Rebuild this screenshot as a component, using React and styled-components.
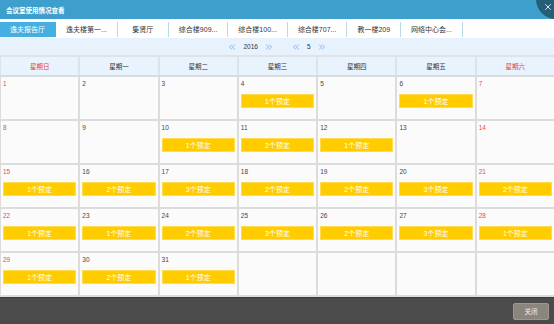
import styled, { createGlobalStyle } from "styled-components";
import { ChevronsLeft, ChevronsRight, X } from "lucide-react";

const GlobalStyle = createGlobalStyle`
  html, body {
    margin: 0;
    padding: 0;
    background: #ffffff;
  }
  body {
    font-family: "Liberation Sans", "Noto Sans CJK SC", sans-serif;
  }
`;

const Dialog = styled.div`
  width: 554px;
  height: 324px;
  display: flex;
  flex-direction: column;
  overflow: hidden;
  background: #ffffff;
`;

const TitleBar = styled.div`
  position: relative;
  height: 19px;
  flex-shrink: 0;
  display: flex;
  align-items: center;
  padding-left: 6px;
  background: #3e9fcd;
  overflow: hidden;
`;

const Title = styled.span`
  font-size: 6.5px;
  font-weight: bold;
  color: #ffffff;
`;

const CloseButton = styled.button`
  position: absolute;
  top: -21px;
  right: -22px;
  width: 40px;
  height: 40px;
  border: none;
  border-radius: 50%;
  background: #255f77;
  color: #ffffff;
  padding: 23px 0 0 7px;
  display: flex;
  align-items: flex-start;
  justify-content: flex-start;
  cursor: pointer;
`;

const TabBar = styled.div`
  height: 19px;
  flex-shrink: 0;
  display: flex;
  align-items: center;
  padding-top: 1px;
  box-sizing: border-box;
`;

const Tab = styled.div`
  height: 15px;
  min-width: 51px;
  box-sizing: border-box;
  padding: 0 10px;
  display: flex;
  align-items: center;
  justify-content: center;
  font-size: 7px;
  white-space: nowrap;
  color: ${(p) => (p.$active ? "#ffffff" : "#333333")};
  background: ${(p) => (p.$active ? "#45afe1" : "transparent")};
  border-right: 1px solid ${(p) => (p.$active ? "#45afe1" : "#bcd8e8")};
`;

const NavBar = styled.div`
  height: 17px;
  flex-shrink: 0;
  display: flex;
  align-items: center;
  justify-content: center;
  gap: 17px;
  background: #e8f2fd;
  border-bottom: 2px solid #dfe3e8;
`;

const NavGroup = styled.div`
  display: flex;
  align-items: center;
  gap: 6px;
  font-size: 6.5px;
  color: #333333;
  svg {
    color: #4f95e3;
  }
`;

const Grid = styled.div`
  display: grid;
  grid-template-columns: repeat(7, 1fr);
  grid-auto-rows: 42px;
  column-gap: 2px;
  row-gap: 2px;
  padding: 0 0 2px 1px;
  background: #dcdcdc;
`;

const HeaderRow = styled.div`
  display: grid;
  grid-template-columns: repeat(7, 1fr);
  column-gap: 2px;
  padding-left: 1px;
  background: #dde3ea;
  border-bottom: 2px solid #d9dcdf;
`;

const HeaderCell = styled.div`
  height: 18px;
  display: flex;
  align-items: center;
  justify-content: center;
  font-size: 6.5px;
  background: #e9f3fd;
  color: ${(p) => (p.$weekend ? "#e83b3b" : "#333333")};
`;

const DayCell = styled.div`
  background: #fbfbfb;
  display: flex;
  flex-direction: column;
  padding: 2px 2px 0 2px;
  box-sizing: border-box;
`;

const DayNumber = styled.span`
  height: 10px;
  font-size: 6.5px;
  line-height: 10px;
  color: ${(p) => (p.$weekend ? "#f04848" : "#444444")};
`;

const Booking = styled.div`
  margin-top: 5px;
  height: 14px;
  box-sizing: border-box;
  border: 1px solid #ffdb4d;
  background: #ffcc00;
  color: #ffffff;
  font-size: 7px;
  display: flex;
  align-items: center;
  justify-content: center;
`;

const Footer = styled.div`
  flex: 1;
  display: flex;
  align-items: center;
  justify-content: flex-end;
  padding-right: 5px;
  background: #4b4b4b;
  border-top: 1px solid #3c3c3c;
`;

const FooterButton = styled.button`
  width: 36px;
  height: 17px;
  border: 1px solid #9d978d;
  border-radius: 2px;
  background: #8a857d;
  color: #f2f2f2;
  font-family: inherit;
  font-size: 6.5px;
  padding: 0;
  cursor: pointer;
`;

const tabs = [
  "逸夫报告厅",
  "逸夫楼第一...",
  "集贤厅",
  "综合楼909...",
  "综合楼100...",
  "综合楼707...",
  "教一楼209",
  "网络中心会...",
];

const weekdays = ["星期日", "星期一", "星期二", "星期三", "星期四", "星期五", "星期六"];

// count of bookings per day of May 2016
const bookings = {
  4: 1, 6: 1,
  10: 1, 11: 2, 12: 1,
  15: 1, 16: 2, 17: 3, 18: 2, 19: 2, 20: 3, 21: 2,
  22: 1, 23: 1, 24: 2, 25: 3, 26: 2, 27: 3, 28: 1,
  29: 1, 30: 2, 31: 1,
};

const days = Array.from({ length: 35 }, (_, i) => (i < 31 ? i + 1 : null));

function App() {
  return (
    <>
      <GlobalStyle />
      <Dialog>
        <TitleBar>
          <Title>会议室使用情况查看</Title>
          <CloseButton aria-label="关闭">
            <X size={10} strokeWidth={2} />
          </CloseButton>
        </TitleBar>
        <TabBar>
          {tabs.map((name, i) => (
            <Tab key={name} $active={i === 0}>
              {name}
            </Tab>
          ))}
        </TabBar>
        <NavBar>
          <NavGroup>
            <ChevronsLeft size={10} strokeWidth={1.6} />
            <span>2016</span>
            <ChevronsRight size={10} strokeWidth={1.6} />
          </NavGroup>
          <NavGroup>
            <ChevronsLeft size={10} strokeWidth={1.6} />
            <span>5</span>
            <ChevronsRight size={10} strokeWidth={1.6} />
          </NavGroup>
        </NavBar>
        <HeaderRow>
          {weekdays.map((d, i) => (
            <HeaderCell key={d} $weekend={i === 0 || i === 6}>
              {d}
            </HeaderCell>
          ))}
        </HeaderRow>
        <Grid>
          {days.map((day, i) => {
            const weekend = i % 7 === 0 || i % 7 === 6;
            return (
              <DayCell key={i}>
                {day && <DayNumber $weekend={weekend}>{day}</DayNumber>}
                {day && bookings[day] && <Booking>{bookings[day]}个预定</Booking>}
              </DayCell>
            );
          })}
        </Grid>
        <Footer>
          <FooterButton>关闭</FooterButton>
        </Footer>
      </Dialog>
    </>
  );
}

export default App;
